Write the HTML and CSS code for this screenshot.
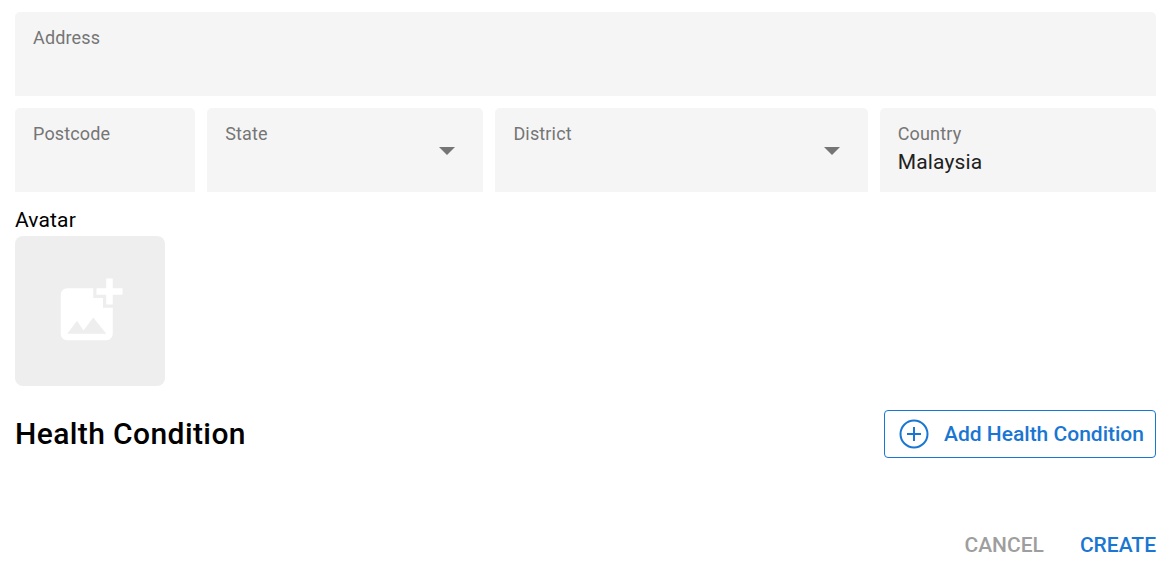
FILE: index.html
```html
<!DOCTYPE html>
<html lang="en">
<head>
    <meta charset="UTF-8">
    <meta name="viewport" content="width=device-width, initial-scale=1.0">
    <title>Create Patient</title>
    <link rel="stylesheet" href="styles.css">
</head>
<body>
    <div class="form-grid">
        <div class="field span-12">
            <label class="field-label">Address</label>
        </div>
        <div class="field span-2">
            <label class="field-label">Postcode</label>
        </div>
        <div class="field span-3">
            <label class="field-label">State</label>
            <span class="arrow"></span>
        </div>
        <div class="field span-4">
            <label class="field-label">District</label>
            <span class="arrow"></span>
        </div>
        <div class="field span-3">
            <label class="field-label">Country</label>
            <div class="field-value">Malaysia</div>
        </div>
    </div>

    <div class="avatar-title">Avatar</div>
    <div class="avatar-box">
        <svg class="avatar-icon" viewBox="0 0 24 24">
            <path d="M19 7v2.99s-1.99.01-2 0V7h-3s.01-1.99 0-2h3V2h2v3h3v2h-3zm-3 4V8h-3V5H5c-1.1 0-2 .9-2 2v12c0 1.1.9 2 2 2h12c1.1 0 2-.9 2-2v-8h-3zM5 19l3-4 2 3 3-4 4 5H5z"/>
        </svg>
    </div>

    <div class="section-head">
        <h2>Health Condition</h2>
        <button class="add-button">
            <svg class="add-icon" viewBox="0 0 30 30">
                <circle cx="15" cy="15" r="13.5"/>
                <path d="M8 15h14M15 8v14"/>
            </svg>
            Add Health Condition
        </button>
    </div>

    <div class="actions">
        <button class="text-button cancel">CANCEL</button>
        <button class="text-button create">CREATE</button>
    </div>
</body>
</html>
```

FILE: styles.css
```css
html {
    background-color: #ffffff;
}
body {
    font-family: Roboto, "Liberation Sans", sans-serif;
    margin: 0;
    padding: 12px 13px 0 15px;
    height: 577px;
    box-sizing: border-box;
    overflow: hidden;
}
.form-grid {
    display: grid;
    grid-template-columns: repeat(12, 1fr);
    gap: 12px;
}
.field {
    position: relative;
    height: 84px;
    box-sizing: border-box;
    padding: 15px 18px 0;
    background-color: #f5f5f5;
    border-radius: 5px 5px 0 0;
}
.span-12 {
    grid-column: span 12;
}
.span-2 {
    grid-column: span 2;
}
.span-3 {
    grid-column: span 3;
}
.span-4 {
    grid-column: span 4;
}
.field-label {
    display: block;
    font-size: 18px;
    line-height: 21px;
    letter-spacing: 0.15px;
    color: #757575;
}
.field-value {
    font-size: 21px;
    line-height: 24px;
    letter-spacing: 0.15px;
    margin-top: 6px;
    color: #212121;
}
.arrow {
    position: absolute;
    top: 39px;
    right: 28px;
    width: 0;
    height: 0;
    border-left: 8px solid transparent;
    border-right: 8px solid transparent;
    border-top: 8px solid #757575;
}
.avatar-title {
    font-size: 21px;
    line-height: 28px;
    letter-spacing: 0.15px;
    margin-top: 14px;
    margin-bottom: 2px;
    color: #000000;
}
.avatar-box {
    display: flex;
    justify-content: center;
    align-items: center;
    width: 150px;
    height: 150px;
    background-color: #eeeeee;
    border-radius: 8px;
}
.avatar-icon {
    width: 78px;
    height: 78px;
    fill: #ffffff;
}
.section-head {
    display: flex;
    justify-content: space-between;
    align-items: center;
    margin-top: 24px;
}
h2 {
    margin: 0 0 2px;
    font-size: 30px;
    font-weight: 500;
    letter-spacing: 0.4px;
    color: #000000;
}
.add-button {
    display: flex;
    align-items: center;
    gap: 15px;
    width: 272px;
    height: 48px;
    padding: 0 11px 0 14px;
    background: none;
    border: 1px solid #1976d2;
    border-radius: 4px;
    color: #1976d2;
    font-family: inherit;
    font-size: 21px;
    font-weight: 500;
    box-sizing: border-box;
    white-space: nowrap;
    cursor: pointer;
}
.add-icon {
    width: 30px;
    height: 30px;
    fill: none;
    stroke: #1976d2;
    stroke-width: 2;
    flex-shrink: 0;
}
.actions {
    display: flex;
    justify-content: flex-end;
    gap: 36px;
    margin-top: 74px;
}
.text-button {
    padding: 0;
    background: none;
    border: none;
    font-family: inherit;
    font-size: 21px;
    font-weight: 500;
    line-height: 26px;
    cursor: pointer;
}
.cancel {
    color: #9e9e9e;
}
.create {
    color: #1976d2;
}
```
